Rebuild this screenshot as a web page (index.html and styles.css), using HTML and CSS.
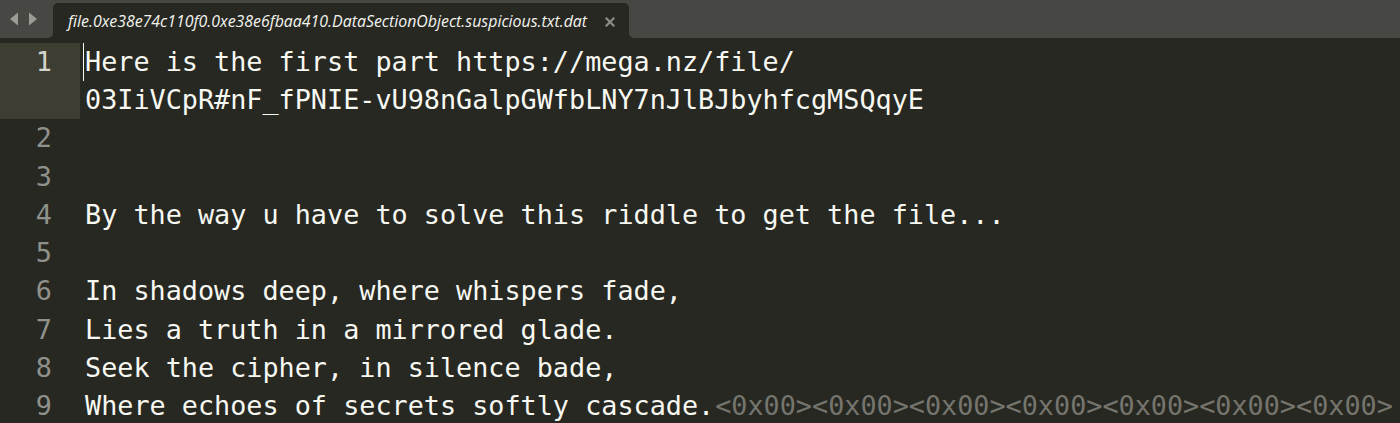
FILE: index.html
```html
<!DOCTYPE html>
<html>
<head>
<meta charset="utf-8">
<link rel="stylesheet" href="styles.css">
</head>
<body>
<div class="window">
  <div class="tabbar">
    <div class="nav">
      <svg class="arrows" width="40" height="16" viewBox="0 0 40 16">
        <polygon points="18,1.5 18,14.5 10,8" fill="#9b9c96"/>
        <polygon points="29,1.5 29,14.5 37,8" fill="#9b9c96"/>
      </svg>
    </div>
    <div class="tabwrap">
      <div class="tab">
        <span class="tab-title">file.0xe38e74c110f0.0xe38e6fbaa410.DataSectionObject.suspicious.txt.dat</span>
        <svg class="close" width="10" height="10" viewBox="0 0 10 10">
          <path d="M1.5 1.5 L8.5 8.5 M8.5 1.5 L1.5 8.5" stroke="#8c8d87" stroke-width="2.2" stroke-linecap="square"/>
        </svg>
      </div>
    </div>
    <div class="filler"></div>
  </div>
  <div class="editor">
    <div class="line current">
      <div class="num">1</div>
      <div class="text caret"><span class="vl">Here is the first part https://mega.nz/file/</span><span class="vl">03IiVCpR#nF_fPNIE-vU98nGalpGWfbLNY7nJlBJbyhfcgMSQqyE</span></div>
    </div>
    <div class="line"><div class="num">2</div><div class="text"></div></div>
    <div class="line"><div class="num">3</div><div class="text"></div></div>
    <div class="line"><div class="num">4</div><div class="text">By the way u have to solve this riddle to get the file...</div></div>
    <div class="line"><div class="num">5</div><div class="text"></div></div>
    <div class="line"><div class="num">6</div><div class="text">In shadows deep, where whispers fade,</div></div>
    <div class="line"><div class="num">7</div><div class="text">Lies a truth in a mirrored glade.</div></div>
    <div class="line"><div class="num">8</div><div class="text">Seek the cipher, in silence bade,</div></div>
    <div class="line"><div class="num">9</div><div class="text">Where echoes of secrets softly cascade.<span class="ctrl">&lt;0x00&gt;&lt;0x00&gt;&lt;0x00&gt;&lt;0x00&gt;&lt;0x00&gt;&lt;0x00&gt;&lt;0x00&gt;</span></div></div>
  </div>
</div>
</body>
</html>
```

FILE: styles.css
```css
html, body {
  margin: 0;
  padding: 0;
  background: #272822;
  overflow: hidden;
}

.window {
  width: 1400px;
  height: 423px;
  overflow: hidden;
  background: #272822;
  display: flex;
  flex-direction: column;
}

.tabbar {
  height: 40px;
  display: flex;
  align-items: flex-start;
  background: #272822;
  flex: none;
}

.nav {
  width: 53px;
  height: 38px;
  background: #474843;
  border-bottom-right-radius: 5px;
  display: flex;
  align-items: center;
}

.arrows {
  display: block;
}

.tabwrap {
  width: 576px;
  height: 40px;
  background: #474843;
  display: flex;
  align-items: flex-end;
}

.tab {
  width: 100%;
  height: 37px;
  background: #272822;
  border-radius: 5px 5px 0 0;
  display: flex;
  align-items: center;
  padding: 0 14px 0 15px;
  box-sizing: border-box;
}

.tab-title {
  font-family: "Open Sans", "DejaVu Sans", sans-serif;
  font-style: italic;
  font-size: 15.9px;
  color: #f4f4ef;
  flex: 1;
  white-space: nowrap;
  margin-top: -1px;
}

.close {
  display: block;
}

.filler {
  flex: 1;
  height: 38px;
  background: #474843;
  border-bottom-left-radius: 5px;
}

.editor {
  padding-top: 3px;
  font-family: "DejaVu Sans Mono", monospace;
  font-size: 26.8px;
  line-height: 38.22px;
  color: #f8f8f2;
}

.line {
  display: flex;
}

.num {
  width: 80px;
  flex: none;
  box-sizing: border-box;
  padding-right: 28px;
  text-align: right;
  color: #90918b;
}

.line.current .num {
  background: #3e3d32;
  color: #d4d4cf;
}

.text {
  padding-left: 5px;
  white-space: pre;
  min-height: 38.22px;
}

.vl {
  display: block;
}

.caret {
  position: relative;
}

.caret::before {
  content: "";
  position: absolute;
  left: 3px;
  top: 0;
  width: 1px;
  height: 38px;
  background: #f8f8f0;
}

.ctrl {
  color: #75756e;
  margin-left: 1px;
}
```
